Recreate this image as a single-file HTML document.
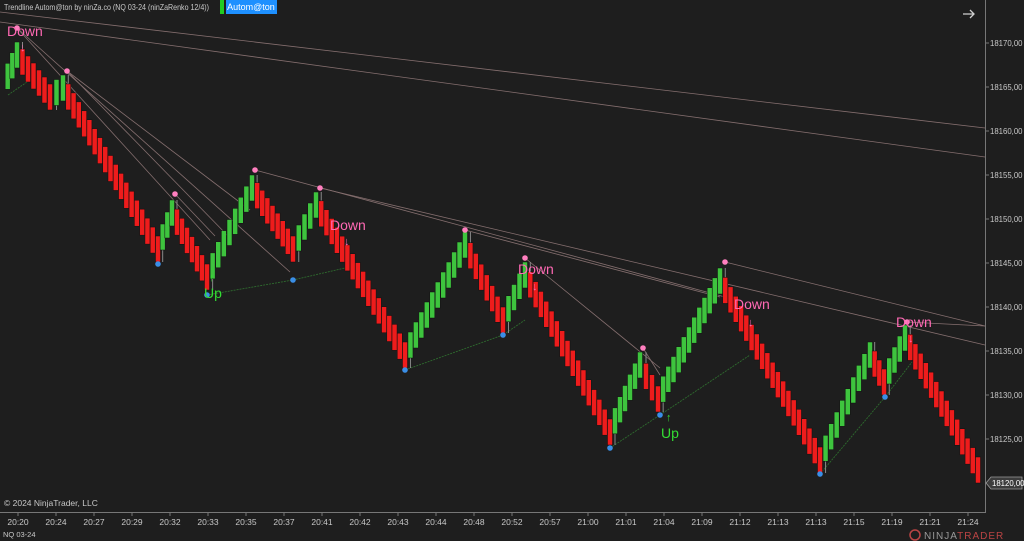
<!DOCTYPE html>
<html><head><meta charset="utf-8"><style>
html,body{margin:0;padding:0;background:#1e1e1e;width:1024px;height:541px;overflow:hidden}
svg{display:block}
text{font-family:"Liberation Sans",sans-serif}
</style></head><body>
<svg id="s" width="1024" height="541" xmlns="http://www.w3.org/2000/svg">
<rect width="1024" height="541" fill="#1e1e1e"/>
<g id="lines" stroke="#a88a8a" stroke-width="0.8" fill="none" opacity="0.75">
<line x1="0" y1="12" x2="985" y2="128"/>
<line x1="0" y1="22" x2="985" y2="157"/>
<line x1="17" y1="28" x2="210" y2="240"/>
<line x1="17" y1="28" x2="290" y2="272"/>
<line x1="67" y1="71" x2="230" y2="238"/>
<line x1="67" y1="71" x2="250" y2="210"/>
<line x1="175" y1="194" x2="215" y2="236"/>
<line x1="255" y1="170" x2="725" y2="297"/>
<line x1="320" y1="188" x2="985" y2="345"/>
<line x1="465" y1="230" x2="720" y2="297"/>
<line x1="525" y1="258" x2="660" y2="368"/>
<line x1="643" y1="348" x2="660" y2="375"/>
<line x1="725" y1="262" x2="985" y2="326"/>
<line x1="907" y1="322" x2="985" y2="326"/>
</g>
<g stroke="#2e6a2e" stroke-width="0.9" fill="none" stroke-dasharray="2,1">
<polyline points="207,295 293,280 345,268"/>
<polyline points="405,370 503,335 525,320"/>
<polyline points="610,448 660,415 750,355"/>
<polyline points="820,474 885,397 912,362"/>
<polyline points="8,95 30,80"/>
</g>
<g id="bars"></g>
<g id="dots"></g>
<g font-size="14" >
<text x="7" y="36" fill="#ff69b4">Down</text>
<text x="330" y="230" fill="#ff69b4">Down</text>
<text x="518" y="274" fill="#ff69b4">Down</text>
<text x="734" y="309" fill="#ff69b4">Down</text>
<text x="896" y="327" fill="#ff69b4">Down</text>
<text x="204" y="298" fill="#33dd33">Up</text>
<text x="661" y="438" fill="#33dd33">Up</text>
</g>
<g font-size="11" font-weight="bold">
<text x="20" y="51" fill="#ff69b4">↓</text>
<text x="344" y="245" fill="#ff69b4">↓</text>
<text x="532" y="290" fill="#ff69b4">↓</text>
<text x="748" y="326" fill="#ff69b4">↓</text>
<text x="908" y="342" fill="#ff69b4">↓</text>
<text x="209" y="281" fill="#33dd33">↑</text>
<text x="666" y="421" fill="#33dd33">↑</text>
</g>
<text x="4" y="10" font-size="8.5" fill="#c8c8c8" textLength="205" lengthAdjust="spacingAndGlyphs">Trendline Autom@ton by ninZa.co (NQ 03-24 (ninZaRenko 12/4))</text>
<rect x="220" y="0" width="4" height="14" fill="#22cc22"/>
<rect x="226" y="0" width="51" height="14" fill="#1e90ff"/>
<text x="251" y="10" font-size="9" fill="#ffffff" text-anchor="middle">Autom@ton</text>
<path d="M963 14 H974 M970 10 L974 14 L970 18" stroke="#d0d0d0" stroke-width="1.3" fill="none"/>
<line x1="985.5" y1="0" x2="985.5" y2="512" stroke="#777" stroke-width="1"/>
<line x1="0" y1="512.5" x2="986" y2="512.5" stroke="#777" stroke-width="1"/>
<g id="axis" font-size="7.8" fill="#c8c8c8"></g>
<text x="4" y="506" font-size="8.5" fill="#c8c8c8">© 2024 NinjaTrader, LLC</text>
<text x="3" y="537" font-size="7.5" fill="#c8c8c8">NQ 03-24</text>
<circle cx="915" cy="535" r="5" fill="none" stroke="#b44" stroke-width="1.5"/>
<text x="924" y="539" font-size="10" letter-spacing="1" fill="#999">NINJA<tspan fill="#b44">TRADER</tspan></text>
</svg>
<script>
(function(){
var NS="http://www.w3.org/2000/svg";
function el(t,a,p){var e=document.createElementNS(NS,t);for(var k in a)e.setAttribute(k,a[k]);p.appendChild(e);return e;}
var piv=[[3,100,-1],[17,42,1],[50,110,-1],[63,75,1],[158,262,-1],[172,200,1],[207,290,-1],[252,175,1],[293,262,-1],[316,192,1],[405,368,-1],[465,232,1],[503,333,-1],[525,262,1],[610,445,-1],[640,352,1],[658,412,-1],[720,268,1],[820,473,-1],[870,342,1],[884,395,-1],[905,325,1],[978,483,-1]];
var bars=document.getElementById('bars');
for(var i=1;i<piv.length;i++){
 var a=piv[i-1],b=piv[i];var n=Math.max(1,Math.round((b[0]-a[0])/5.33));
 var up=b[2]>0;
 var s0=up?a[1]-26:a[1]+26;
 for(var j=1;j<=n;j++){
  var bx=a[0]+(b[0]-a[0])*j/n,by=s0+(b[1]-s0)*j/n;
  var bt=up?by:by-26;
  if(j==1&&i>1){el('line',{x1:bx,x2:bx,y1:up?bt:a[1],y2:up?a[1]:bt+26,stroke:'#888','stroke-width':1},bars);}
  el('rect',{x:bx-2.5,y:bt,width:5,height:26,fill:up?'#3ec43e':'#ee1c1c',stroke:'#111','stroke-width':0.5},bars);
 }
}
var dots=document.getElementById('dots');
[[17,28,'#ff7fbf'],[67,71,'#ff7fbf'],[175,194,'#ff7fbf'],[255,170,'#ff7fbf'],[320,188,'#ff7fbf'],[465,230,'#ff7fbf'],[525,258,'#ff7fbf'],[643,348,'#ff7fbf'],[725,262,'#ff7fbf'],[907,322,'#ff7fbf'],
 [158,264,'#3a8ee6'],[207,295,'#3a8ee6'],[293,280,'#3a8ee6'],[405,370,'#3a8ee6'],[503,335,'#3a8ee6'],[610,448,'#3a8ee6'],[660,415,'#3a8ee6'],[820,474,'#3a8ee6'],[885,397,'#3a8ee6']].forEach(function(d){
 el('circle',{cx:d[0],cy:d[1],r:2.8,fill:d[2]},dots);});
var ax=document.getElementById('axis');
for(var k=0;k<=10;k++){var p=18170-5*k,yy=43+44*k;
 el('line',{x1:985,x2:989,y1:yy,y2:yy,stroke:'#777'},ax);
 if(k<10){var t=el('text',{x:990,y:yy+3},ax);t.textContent=p+',00';}}
el('path',{d:'M986 483 L991 477 H1022 V489 H991 Z',fill:'#3c3c3c',stroke:'#999','stroke-width':0.8},ax);
var t2=el('text',{x:992,y:486,fill:'#fff'},ax);t2.textContent='18120,00';
var tl=['20:20','20:24','20:27','20:29','20:32','20:33','20:35','20:37','20:41','20:42','20:43','20:44','20:48','20:52','20:57','21:00','21:01','21:04','21:09','21:12','21:13','21:13','21:15','21:19','21:21','21:24'];
tl.forEach(function(s,i){var x=18+38*i;el('line',{x1:x,x2:x,y1:512,y2:516,stroke:'#777'},ax);var t=el('text',{x:x,y:525,'text-anchor':'middle','font-size':8.5},ax);t.textContent=s;});
})();
</script>
</body></html>
